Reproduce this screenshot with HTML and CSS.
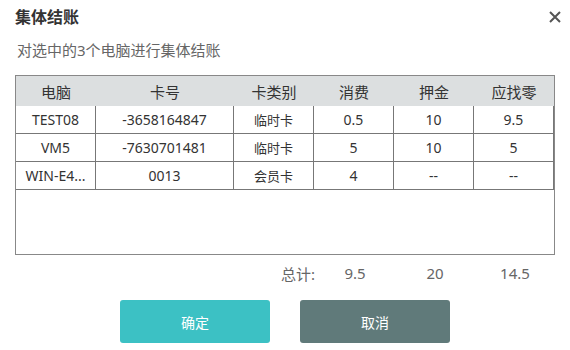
FILE: index.html
```html
<!doctype html>
<html lang="zh">

<head>
  <meta charset="utf-8">
  <title>集体结账</title>
  <link rel="stylesheet" href="styles.css">
</head>

<body>
  <section class="dialog">
    <div class="dialog-head">
      <h1>集体结账</h1>
      <svg class="close" width="12" height="12" viewBox="0 0 12 12">
        <path d="M1 1 L11 11 M11 1 L1 11" stroke="#555" stroke-width="2" fill="none"/>
      </svg>
    </div>
    <p class="hint">对选中的3个电脑进行集体结账</p>

    <div class="grid-box">
      <table class="grid">
        <colgroup>
          <col class="c-pc">
          <col class="c-card">
          <col class="c-type">
          <col class="c-num">
          <col class="c-num">
          <col class="c-num">
        </colgroup>
        <thead>
          <tr>
            <th>电脑</th>
            <th>卡号</th>
            <th>卡类别</th>
            <th>消费</th>
            <th>押金</th>
            <th>应找零</th>
          </tr>
        </thead>
        <tbody>
          <tr>
            <td>TEST08</td>
            <td>-3658164847</td>
            <td class="type">临时卡</td>
            <td>0.5</td>
            <td>10</td>
            <td>9.5</td>
          </tr>
          <tr>
            <td>VM5</td>
            <td>-7630701481</td>
            <td class="type">临时卡</td>
            <td>5</td>
            <td>10</td>
            <td>5</td>
          </tr>
          <tr>
            <td>WIN-E4...</td>
            <td>0013</td>
            <td class="type">会员卡</td>
            <td>4</td>
            <td>--</td>
            <td>--</td>
          </tr>
        </tbody>
      </table>
    </div>

    <div class="totals">
      <span class="label">总计:</span>
      <span>9.5</span>
      <span>20</span>
      <span>14.5</span>
    </div>

    <div class="actions">
      <button class="btn ok">确定</button>
      <button class="btn cancel">取消</button>
    </div>
  </section>
</body>

</html>
```

FILE: styles.css
```css
* {
  box-sizing: border-box;
  font-family: "Noto Sans", "Noto Sans CJK SC", sans-serif;
}

body {
  margin: 0;
  background: #fff;
  color: #333;
}

.dialog {
  width: 570px;
  height: 350px;
  padding: 4px 15px 0 15px;
}

.dialog-head {
  display: flex;
  justify-content: space-between;
  align-items: center;
  height: 24px;
}

.dialog-head h1 {
  margin: 0;
  font-size: 16px;
  font-weight: bold;
  color: #333;
}

.close {
  margin-right: -6px;
  margin-top: 1px;
}

.hint {
  margin: 12px 0 0 2px;
  font-size: 15px;
  line-height: 21px;
  color: #666;
}

.grid-box {
  margin-top: 14px;
  width: 540px;
  height: 180px;
  border: 1px solid #888;
}

.grid {
  border-collapse: separate;
  border-spacing: 0;
  table-layout: fixed;
  width: 538px;
}

.c-pc,
.c-type,
.c-num {
  width: 80px;
}

.c-card {
  width: 138px;
}

.grid th {
  height: 30px;
  padding: 0;
  background: #dcdfe0;
  font-size: 15px;
  font-weight: normal;
  color: #333;
}

.grid td {
  height: 28px;
  padding: 0;
  text-align: center;
  font-size: 14px;
  color: #333;
  border-right: 1px solid #777;
  border-bottom: 1px solid #777;
  white-space: nowrap;
  overflow: hidden;
}

.grid td.type {
  font-size: 13px;
}

.totals {
  display: grid;
  grid-template-columns: 300px 80px 80px 80px;
  margin-top: 5px;
  height: 26px;
  align-items: center;
  font-size: 15px;
  color: #666;
}

.totals span {
  text-align: center;
}

.totals .label {
  text-align: right;
}

.actions {
  display: flex;
  justify-content: center;
  gap: 30px;
  margin-top: 14px;
}

.btn {
  width: 150px;
  height: 43px;
  border: none;
  border-radius: 3px;
  color: #fff;
  font-size: 14px;
}

.btn.ok {
  background: #3cc1c4;
}

.btn.cancel {
  background: #607a7a;
}
```
